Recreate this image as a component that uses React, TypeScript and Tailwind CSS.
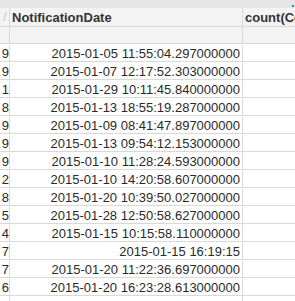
const rows = [
  ["9", "2015-01-05 11:55:04.297000000"],
  ["9", "2015-01-07 12:17:52.303000000"],
  ["1", "2015-01-29 10:11:45.840000000"],
  ["8", "2015-01-13 18:55:19.287000000"],
  ["9", "2015-01-09 08:41:47.897000000"],
  ["9", "2015-01-13 09:54:12.153000000"],
  ["9", "2015-01-10 11:28:24.593000000"],
  ["2", "2015-01-10 14:20:58.607000000"],
  ["8", "2015-01-20 10:39:50.027000000"],
  ["5", "2015-01-28 12:50:58.627000000"],
  ["4", "2015-01-15 10:15:58.110000000"],
  ["7", "2015-01-15 16:19:15"],
  ["7", "2015-01-20 11:22:36.697000000"],
  ["6", "2015-01-20 16:23:28.613000000"],
]

function Row({ a, b, c, className }: { a: React.ReactNode; b: React.ReactNode; c?: React.ReactNode; className: string }) {
  return (
    <div className={"flex " + className}>
      <div className="w-[10px] shrink-0 overflow-hidden border-r border-[#d9d9d9] text-right">{a}</div>
      <div className="w-[233px] shrink-0 overflow-hidden whitespace-nowrap border-r border-[#d9d9d9] pr-[2px] text-right">{b}</div>
      <div className="flex-1 overflow-hidden whitespace-nowrap pl-[2px]">{c}</div>
    </div>
  )
}

export default function App() {
  return (
    <div className="h-[301px] w-[295px] overflow-hidden bg-white font-['Liberation_Sans',Arial,sans-serif] text-[13px] leading-[17px] text-[#2a2a2a]">
      <div className="flex h-[8px] items-end justify-end bg-[#e6e6e6] pb-[1px] pr-[1px]">
        <div className="h-[2px] w-[2px] bg-[#14a3a3]" />
      </div>

      <div className="flex h-[19px] border-b border-[#d9d9d9] bg-[#f3f3f3] font-bold text-[#333]">
        <div className="w-[10px] shrink-0 overflow-hidden border-r border-[#d9d9d9] pl-[3px] font-normal text-[#c4c4c4]">/</div>
        <div className="w-[233px] shrink-0 overflow-hidden whitespace-nowrap border-r border-[#d9d9d9] pl-[2px] pt-[1px]">NotificationDate</div>
        <div className="flex-1 overflow-hidden whitespace-nowrap pl-[2px] pt-[1px]">count(Count)</div>
      </div>

      <Row a="" b="" className="h-[17px] border-b border-[#d9d9d9] bg-[#f3f3f3]" />

      {rows.map(([n, d], i) => (
        <Row key={i} a={n} b={d} className="h-[18px] border-b border-[#d9d9d9] pt-[1px]" />
      ))}

      <Row a="" b="" className="h-[10px]" />
    </div>
  )
}
